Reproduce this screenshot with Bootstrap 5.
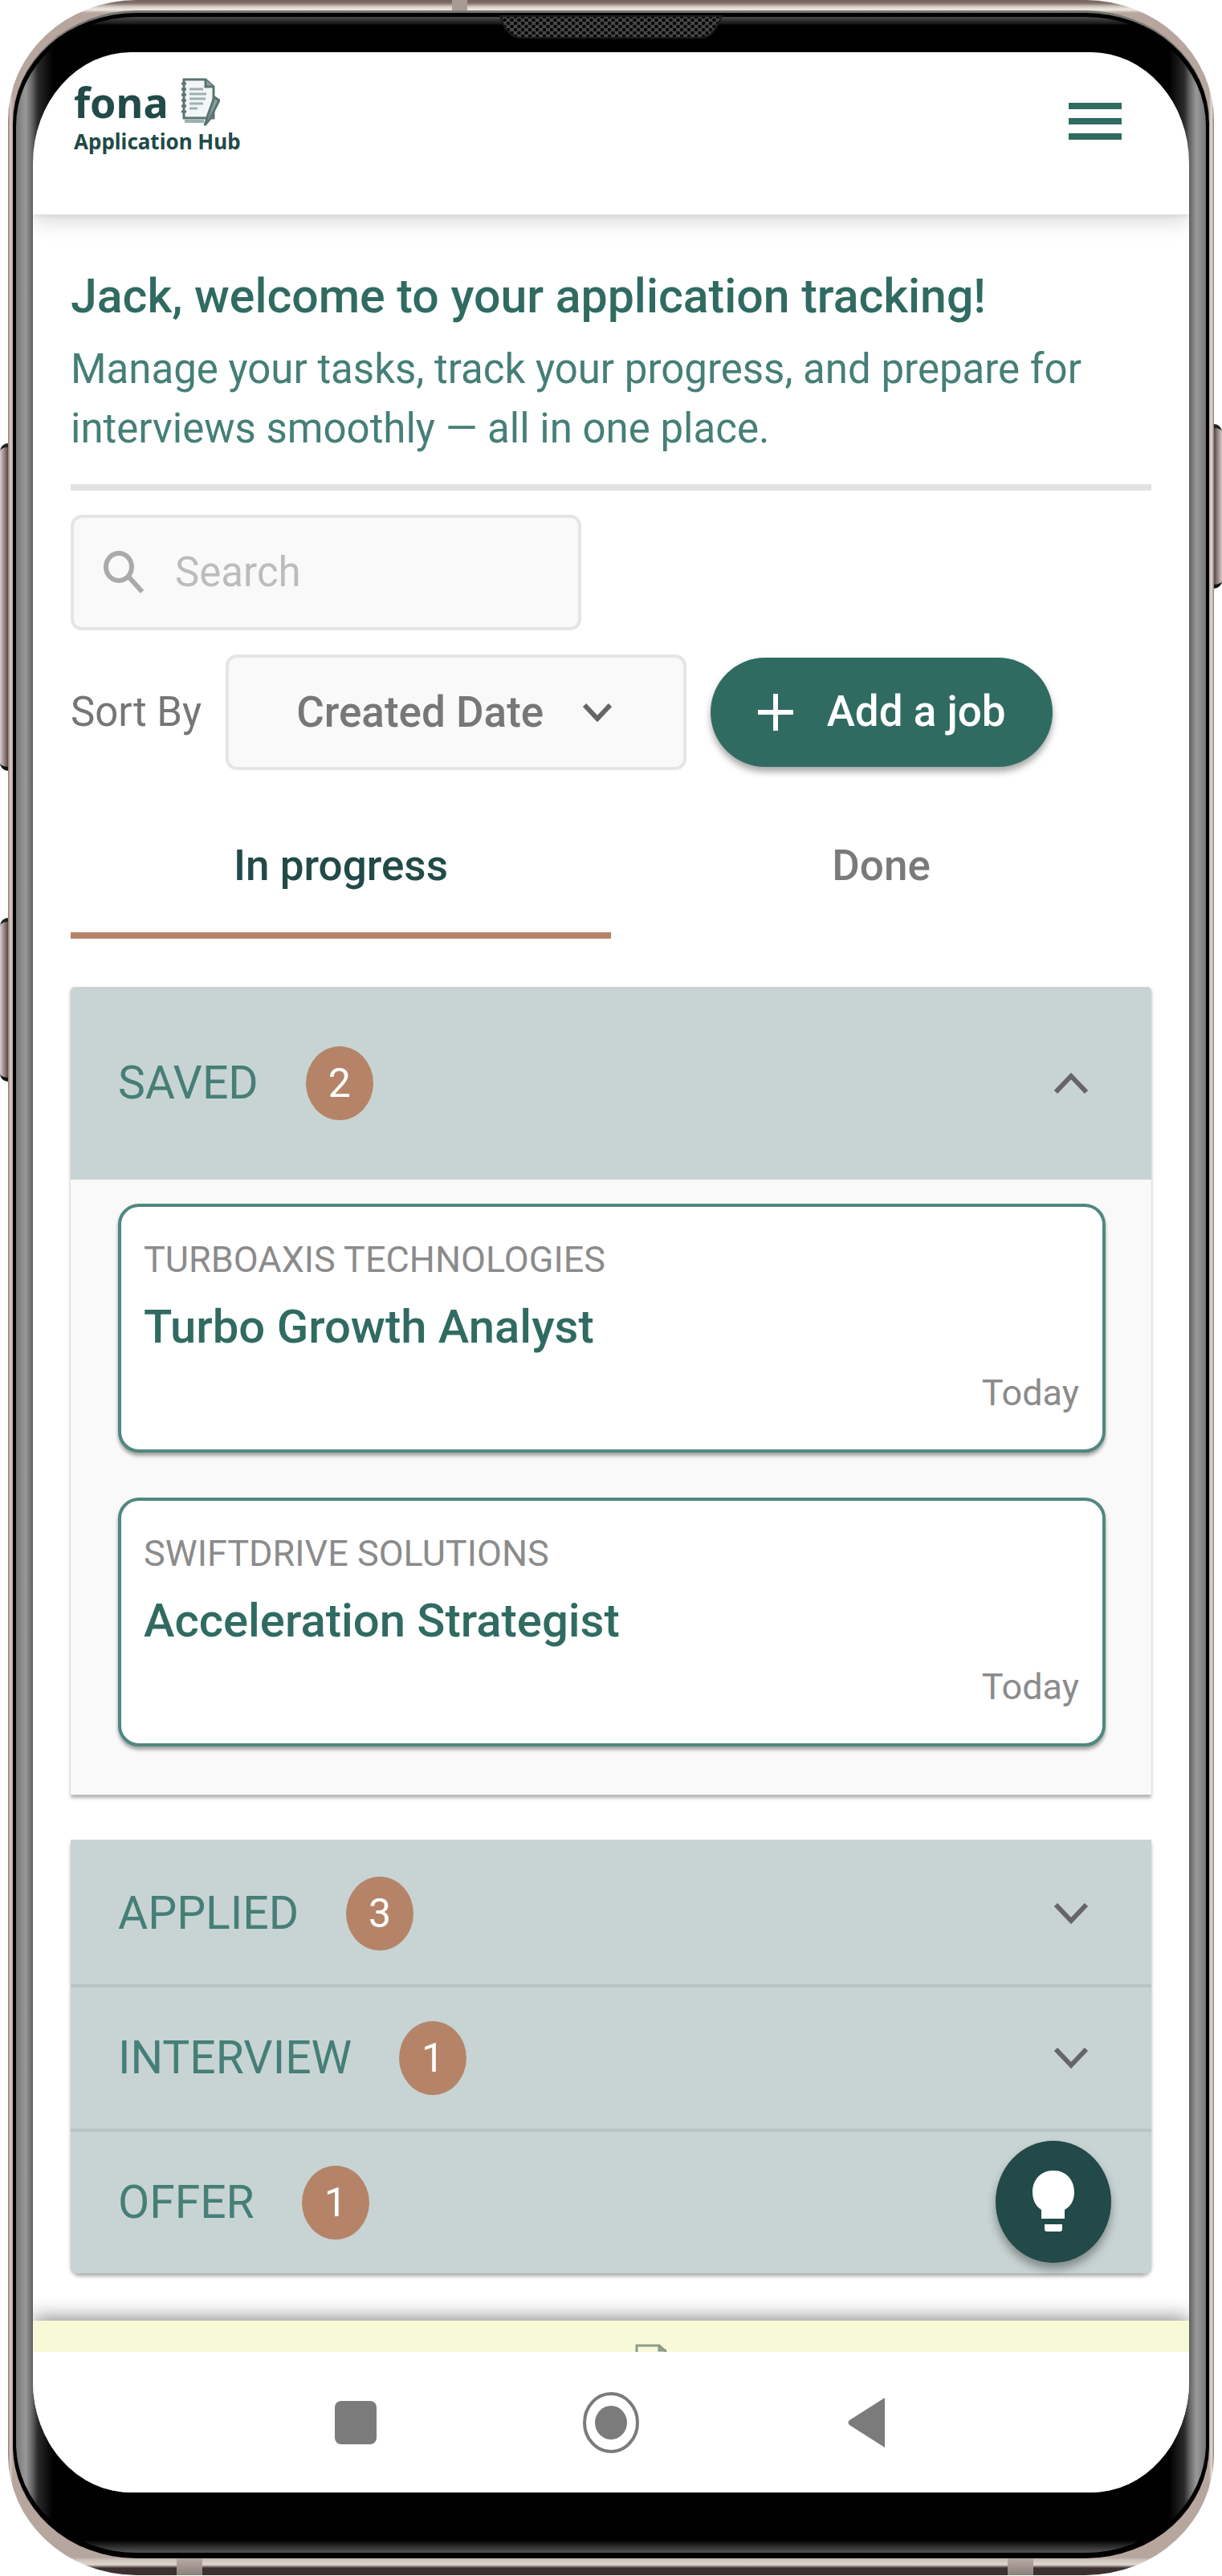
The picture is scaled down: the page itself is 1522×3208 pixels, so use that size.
<!DOCTYPE html>
<html lang="en">
<head>
<meta charset="utf-8">
<meta name="viewport" content="width=device-width, initial-scale=1">
<title>fona Application Hub</title>
<link href="https://cdn.jsdelivr.net/npm/bootstrap@5.3.0/dist/css/bootstrap.min.css" rel="stylesheet">
<style>
:root{--green:#306b62;--deep:#214a48;--soft:#457f77;--sage:#c8d4d3;--clay:#b58468;--ink:#767676}
body{font-family:Roboto,"Liberation Sans",sans-serif;background:#fff;color:var(--ink);font-size:51px;line-height:74px}
button,input,select{font-family:inherit}
svg{display:block;flex:none}
/* phone body */
.phone{margin:0 10px;padding:13px 6px 21px;border-radius:160px/150px;
 background:
  linear-gradient(#b5aaa4,#8c807b) 210px 100%/32px 21px no-repeat,
  linear-gradient(#b5aaa4,#8c807b) calc(100% - 225px) 100%/32px 21px no-repeat,
  linear-gradient(#a89b94,#a89b94) 553px 0/19px 16px no-repeat,
  linear-gradient(#735f5b,#84716a 4px,#cfc6be 8px,#eeeae3 12px,transparent 16px) 0 0/100% 16px no-repeat,
  linear-gradient(transparent,#cfc4bc 3px,#ded6cd 9px,#3d312f 13px,#3d312f) 0 100%/100% 22px no-repeat,
  linear-gradient(90deg,#8b7a74,#d9cdc5 3px,#b7a69e 6px,#b7a69e calc(100% - 6px),#e6dfd7 calc(100% - 3px),#8b7a74)}
.bezel{padding:5px 4px 7px;border-radius:154px/140px;background:#000;border-top:3px solid #777672}
.glass{padding:44px 21px 75px;border-radius:150px/136px;
 background:
  linear-gradient(#4a4a4a,#151515 9px,transparent 10px) 50% 0/calc(100% - 170px) 10px no-repeat,
  linear-gradient(transparent,#555) 50% 100%/calc(100% - 170px) 16px no-repeat,
  linear-gradient(90deg,#777,#999 12px,#666 20px,#2a2a2a 27px,#000 46px,#000 calc(100% - 46px),#2a2a2a calc(100% - 27px),#666 calc(100% - 20px),#999 calc(100% - 12px),#777)}
.screen{background:#fff;border-radius:122px/138px;overflow:hidden}
.side-key{position:absolute;width:12px;background:linear-gradient(90deg,#d9cdcb,#8d7d7a 6px,#3a2c2c);border-radius:10px 0 0 10px;border-top:5px solid #222;border-bottom:5px solid #111}
.key-volume{left:0;top:552px;height:408px}
.key-assist{left:0;top:1143px;height:204px}
.key-power{right:0;top:528px;height:205px;background:linear-gradient(90deg,#3a2c2c,#8d7d7a 6px,#d9cdcb);border-radius:0 10px 10px 0}
.grille{position:absolute;top:19px;left:50%;transform:translateX(-50%)}
/* app bar */
.app-bar{height:202px;padding:32px 84px 0 51px;box-shadow:0 10px 24px rgba(0,0,0,.14),0 4px 4px rgba(0,0,0,.04);position:relative}
.brand-link{font-family:"Noto Sans","Open Sans",sans-serif;font-weight:700;color:var(--deep);text-decoration:none}
.brand-link:hover{color:var(--green)}
.brand-top{font-size:52px;line-height:60px;gap:10px}
.brand-sub{font-size:26px;line-height:34px}
.menu-btn{border:0;background:none;padding:0;margin-top:30px}
/* page */
.page-body{padding:65px 47px 59px}
.page-title{font-size:59px;line-height:74px;font-weight:500;color:var(--green);margin:0 0 17px}
.page-intro{color:var(--soft);margin:0 0 32px}
.rule{height:8px;border:0;background:#e2e2e2;opacity:1;margin:0 0 30px}
.field{height:144px;background:#f9f9f9;border:4px solid #e5e5e5;border-radius:14px}
.search-field{width:636px;padding:0 36px;gap:38px;margin-bottom:30px}
.search-field input{border:0;background:none;padding:0;width:100%;min-width:0;outline:0;color:var(--ink)}
.search-field input::placeholder{color:#bcbcbc;opacity:1}
.tool-row{gap:30px}
.sort-select{width:574px;display:grid;align-items:center}
.sort-select>*{grid-area:1/1}
.sort-select select{appearance:none;border:0;background:none;height:100%;padding:0 0 0 84px;font-size:53px;font-weight:500;color:#777}
.sort-select svg{justify-self:end;margin-right:89px;pointer-events:none}
.add-btn{width:426px;height:136px;border:0;border-radius:68px;background:var(--green);color:#fff;font-size:53px;font-weight:500;gap:42px;box-shadow:0 6px 8px rgba(0,0,0,.35);padding:0}
.add-btn:hover{background:var(--deep);color:#fff}
.status-tabs{margin:42px 0 60px}
.status-tabs .nav-link{height:168px;padding:40px 0 0;border-radius:0;border-bottom:8px solid transparent;color:#7a7a7a;font-size:53px;font-weight:500}
.status-tabs .nav-link.active{color:var(--deep);border-color:var(--clay)}
/* job stages */
.stages{--bs-accordion-border-width:0;--bs-accordion-border-radius:0}
.stage{background:#f9f9f9;color:inherit;box-shadow:0 4px 4px rgba(0,0,0,.3)}
.stage+.stage{border-top:4px solid #b7c4c3}
.stage.opened{margin-bottom:56px}
.stage.opened+.stage{border-color:var(--sage)}
.stage:last-child{border-radius:0 0 12px 12px}
.stages .accordion-button{height:176px;padding:0 78px 0 59px;background:var(--sage);color:var(--soft);font-size:57px;box-shadow:none;font-weight:400;border-radius:inherit}
.stages .accordion-button::after{display:none}
.stages .opened .accordion-button{height:240px}
.tally{width:84px;height:92px;border-radius:50%;background:var(--clay);color:#fff;font-size:50px;margin-left:59px}
.job-list{padding:30px 57px 60px 59px;gap:56px}
.job-card{border:4px solid #4f8880;border-radius:26px;background:#fff;height:310px;padding:28px 29px 0 28px;box-shadow:0 4px 4px rgba(0,0,0,.35);text-decoration:none;color:#8b8b8b;font-size:45px;line-height:76px}
.job-card:hover{background:#f4f8f7}
.job-name{font-size:58px;font-weight:500;color:var(--green);line-height:90px}
.tip-btn{position:absolute;right:50px;bottom:13px;width:144px;height:152px;border:0;border-radius:50%;background:var(--deep);box-shadow:0 8px 12px rgba(0,0,0,.35);padding:0;z-index:5}
.stages+.page-end{height:3px}
.promo{height:39px;background:#f8f9d6;box-shadow:0 -4px 24px rgba(0,0,0,.45);position:relative;padding-left:100px}
.sys-nav{height:175px;position:relative;background:#fff;padding:0 367px}
.sys-nav button{width:70px;border:0;background:none;padding:0}
</style>
</head>
<body>
<div class="position-relative">
<span class="side-key key-volume"></span><span class="side-key key-assist"></span><span class="side-key key-power"></span>
<div class="phone position-relative"><div class="bezel"><div class="glass">
<svg class="grille" width="278" height="30" viewBox="0 0 278 30"><defs><pattern id="mesh" width="9" height="8" patternUnits="userSpaceOnUse"><rect width="9" height="8" fill="#484848"/><ellipse cx="2" cy="2" rx="2.4" ry="2.2" fill="#080808"/><ellipse cx="6.500" cy="6" rx="2.400" ry="2.200" fill="#080808"/></pattern></defs><path d="M1 1H277C271 15 265 28 250 28H28C13 28 5 15 1 1Z" fill="url(#mesh)" stroke="#1c1c1c" stroke-width="2"/></svg>
<div class="screen">
<header class="app-bar d-flex justify-content-between align-items-start">
 <a class="brand-link" href="#">
  <span class="brand-top d-flex">fona
   <svg width="54" height="62" viewBox="0 0 54 62" fill="none" stroke="#5a7472" stroke-width="3"><path d="M9 2H36L46 11V50H9Z" fill="#f3f6f6"/><path d="M36 2V11H46M41 52 53 28 47 24 39 46 35 59Z" fill="#8ba09e"/><path d="M16 14H33M16 20H37M16 26H36M16 32H33M16 38H26" stroke="#9eb0ae"/><path d="M6 7H12M6 14H12M6 21H12M6 28H12M6 35H12M6 42H12"/><path d="M10 54H34" stroke="#9eb0ae" stroke-width="4"/></svg></span>
  <span class="brand-sub d-block">Application Hub</span>
 </a>
 <button class="menu-btn" aria-label="Menu"><svg width="66" height="48" viewBox="0 0 66 48" fill="#306b62"><path d="M0 1H66V9H0ZM0 20H66V28H0ZM0 39H66V47H0Z"/></svg></button>
</header>
<main class="page-body position-relative">
 <h1 class="page-title">Jack, welcome to your application tracking!</h1>
 <p class="page-intro">Manage your tasks, track your progress, and prepare for interviews smoothly — all in one place.</p>
 <hr class="rule">
 <label class="field search-field d-flex align-items-center">
  <svg width="52" height="54" viewBox="0 0 52 54" fill="none" stroke="#aaa" stroke-width="6"><ellipse cx="20" cy="20" rx="16" ry="17"/><path d="M32 32 49 51"/></svg>
  <input type="search" placeholder="Search" aria-label="Search">
 </label>
 <div class="tool-row d-flex align-items-center">
  <label for="sort">Sort By</label>
  <div class="field sort-select">
   <select id="sort"><option>Created Date</option><option>Company</option></select>
   <svg width="36" height="24" viewBox="0 0 36 24" fill="none" stroke="#666" stroke-width="6"><path d="M2 3 18 20 34 3"/></svg>
  </div>
  <button class="add-btn btn d-flex align-items-center justify-content-center"><svg width="44" height="46" viewBox="0 0 44 46" stroke="#fff" stroke-width="6"><path d="M22 0V46M0 23H44"/></svg><span>Add a job</span></button>
 </div>
 <ul class="nav nav-fill status-tabs flex-nowrap">
  <li class="nav-item w-50"><a class="nav-link active" href="#">In progress</a></li>
  <li class="nav-item w-50"><a class="nav-link" href="#">Done</a></li>
 </ul>
 <div class="accordion stages">
  <section class="accordion-item stage opened">
   <button class="accordion-button" aria-expanded="true">SAVED<span class="tally d-flex align-items-center justify-content-center">2</span>
    <svg class="ms-auto" width="44" height="28" viewBox="0 0 44 28" fill="none" stroke="#666" stroke-width="6"><path d="M3 25 22 5 41 25"/></svg></button>
   <div class="job-list d-flex flex-column">
    <a class="job-card d-flex flex-column" href="#"><span>TURBOAXIS TECHNOLOGIES</span><span class="job-name">Turbo Growth Analyst</span><span class="align-self-end">Today</span></a>
    <a class="job-card d-flex flex-column" href="#"><span>SWIFTDRIVE SOLUTIONS</span><span class="job-name">Acceleration Strategist</span><span class="align-self-end">Today</span></a>
   </div>
  </section>
  <section class="accordion-item stage">
   <button class="accordion-button collapsed" aria-expanded="false">APPLIED<span class="tally d-flex align-items-center justify-content-center">3</span>
    <svg class="ms-auto" width="44" height="28" viewBox="0 0 44 28" fill="none" stroke="#666" stroke-width="6"><path d="M3 3 22 23 41 3"/></svg></button>
  </section>
  <section class="accordion-item stage">
   <button class="accordion-button collapsed" aria-expanded="false">INTERVIEW<span class="tally d-flex align-items-center justify-content-center">1</span>
    <svg class="ms-auto" width="44" height="28" viewBox="0 0 44 28" fill="none" stroke="#666" stroke-width="6"><path d="M3 3 22 23 41 3"/></svg></button>
  </section>
  <section class="accordion-item stage position-relative">
   <button class="accordion-button collapsed" aria-expanded="false">OFFER<span class="tally d-flex align-items-center justify-content-center">1</span></button>
   <button class="tip-btn d-flex align-items-center justify-content-center" aria-label="Tips"><svg width="52" height="78" viewBox="0 0 52 78" fill="#fff"><path d="M26 0C11 0 0 11 0 27C0 38 5 45 11 49V60H40V49C47 45 52 38 52 27C52 11 41 0 26 0ZM15 67H37V73Q37 76 34 76H18Q15 76 15 73Z"/></svg></button>
  </section>
 </div>
</main>
<footer>
 <div class="promo d-flex justify-content-center align-items-end"><svg width="42" height="10" viewBox="0 0 42 10" fill="none" stroke="#8a9c8c" stroke-width="3"><path d="M3 10V2H31L40 10M31 2V8H40"/></svg></div>
 <nav class="sys-nav d-flex align-items-center justify-content-between">
  <button aria-label="Recent apps"><svg class="mx-auto" width="54" height="54" viewBox="0 0 54 54"><rect x="1" width="52" height="54" rx="8" fill="#7b7b7b"/></svg></button>
  <button aria-label="Home"><svg width="70" height="76" viewBox="0 0 70 76"><ellipse cx="35" cy="38" rx="33" ry="36" fill="none" stroke="#7b7b7b" stroke-width="4"/><ellipse cx="35" cy="38" rx="20" ry="21" fill="#7b7b7b"/></svg></button>
  <button aria-label="Back"><svg class="mx-auto" width="46" height="62" viewBox="0 0 46 62"><path d="M46 0V62L2 34Q-1 31 2 28Z" fill="#7b7b7b"/></svg></button>
 </nav>
</footer>
</div></div></div></div></div>
<script src="https://cdn.jsdelivr.net/npm/bootstrap@5.3.0/dist/js/bootstrap.bundle.min.js"></script>
</body>
</html>
